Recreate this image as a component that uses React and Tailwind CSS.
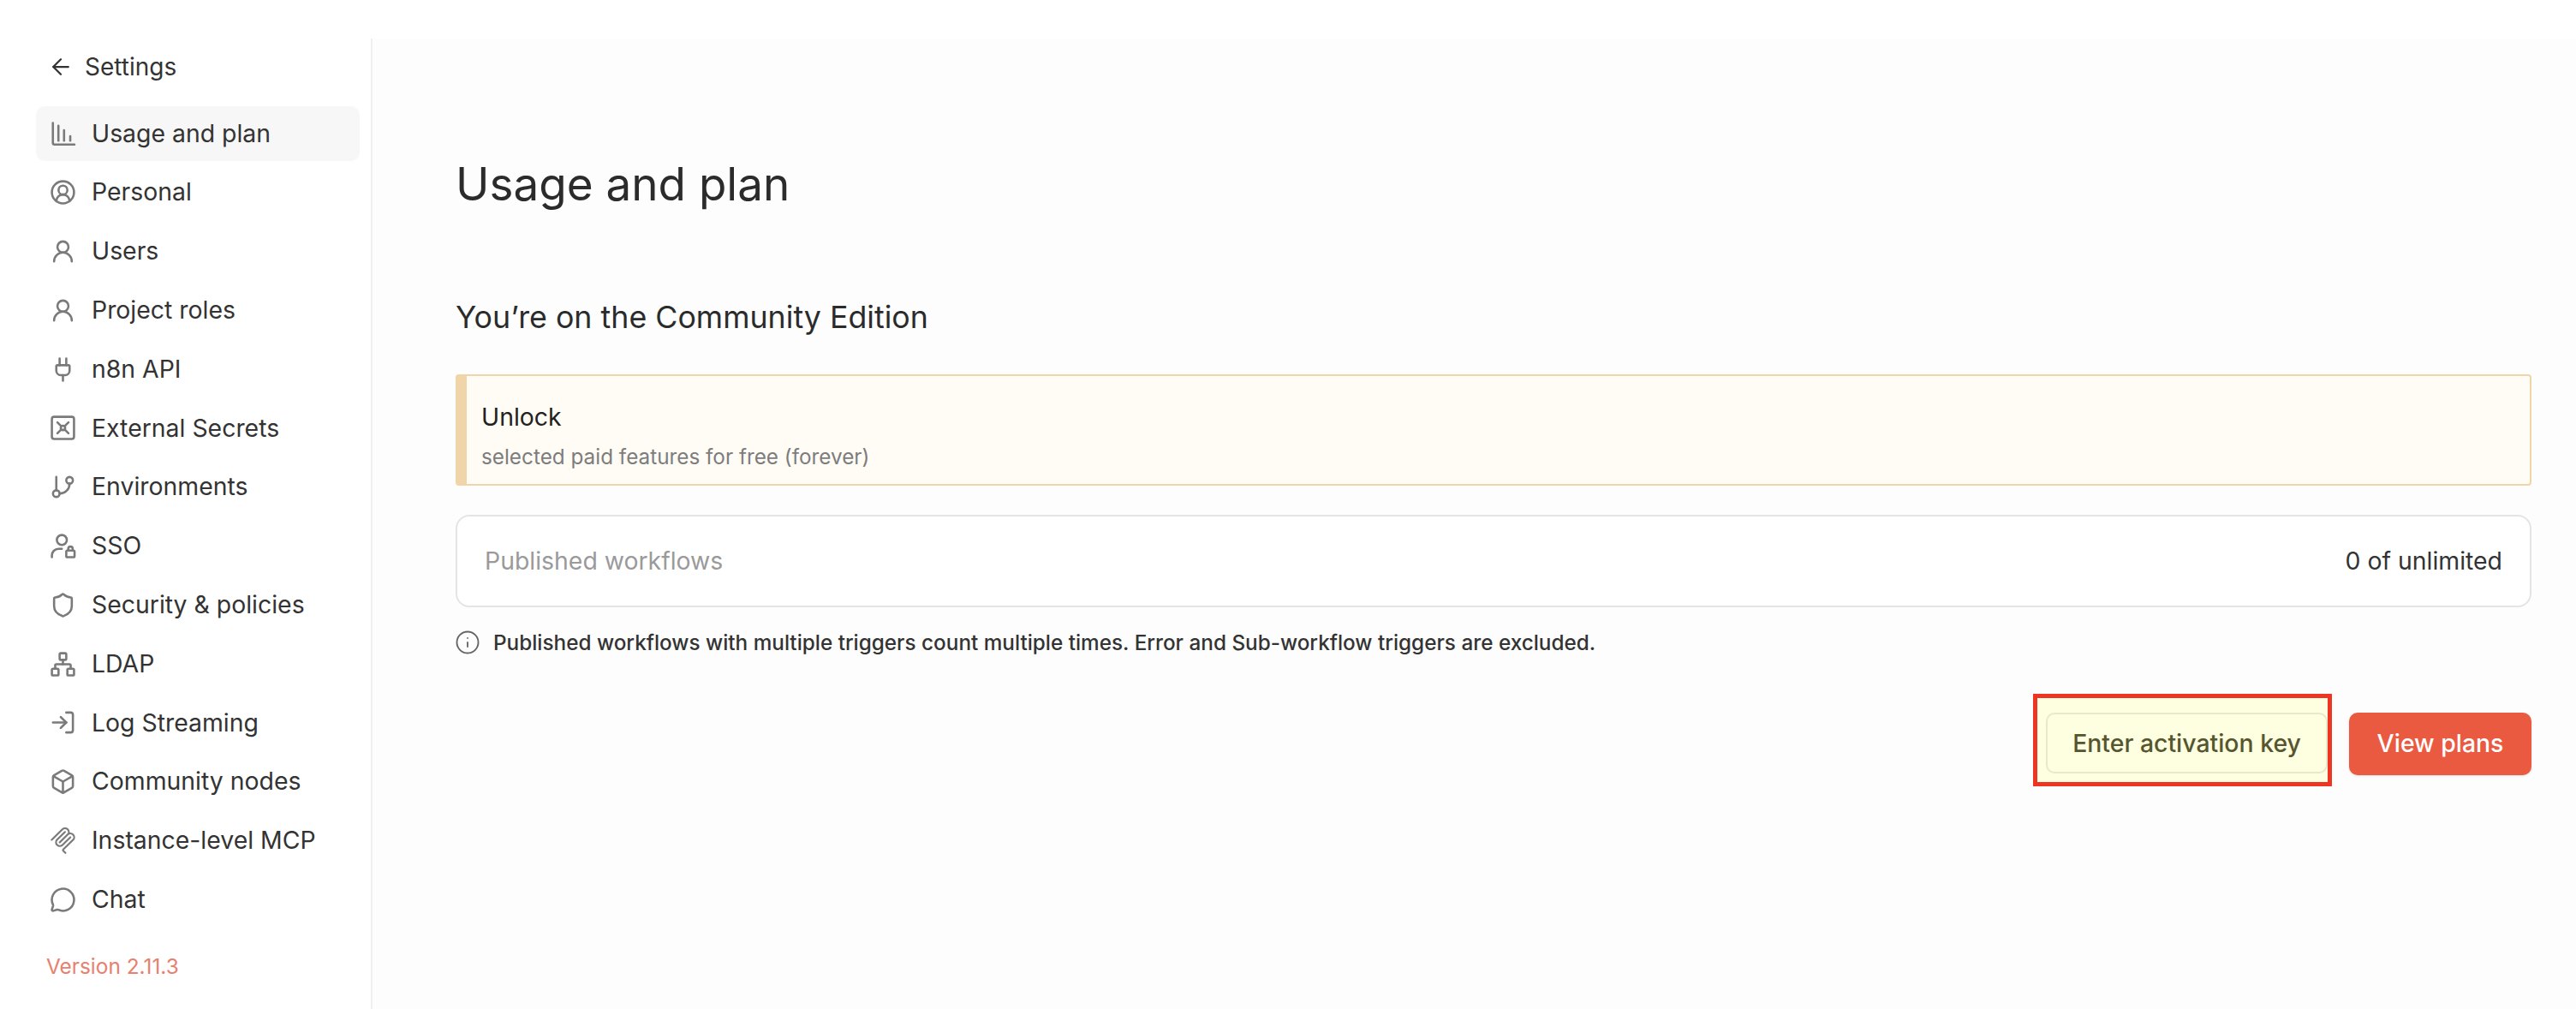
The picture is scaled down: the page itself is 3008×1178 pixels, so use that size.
import React from 'react';
import {
  ArrowLeft,
  CircleUserRound,
  UserRound,
  Plug,
  GitBranch,
  Shield,
  Network,
  LogIn,
  Box,
  MessageCircle,
  Info,
} from 'lucide-react';

const UsageIcon = (props) => (
  <svg viewBox="0 0 24 24" fill="none" stroke="currentColor" strokeWidth="2" strokeLinecap="round" strokeLinejoin="round" {...props}>
    <path d="M2.9 2v18a1.5 1.5 0 0 0 1.5 1.5h18" />
    <path d="M7.9 4.5V18" />
    <path d="M13 8.5V18" />
    <path d="M18.6 14v4" />
  </svg>
);

const VaultIcon = (props) => (
  <svg viewBox="0 0 24 24" fill="none" stroke="currentColor" strokeWidth="2" strokeLinecap="round" strokeLinejoin="round" {...props}>
    <rect x="2" y="2" width="20" height="20" rx="2" />
    <circle cx="12" cy="12" r="2" />
    <path d="m7 7 3.5 3.5M17 7l-3.5 3.5M7 17l3.5-3.5M17 17l-3.5-3.5" />
  </svg>
);

const SsoIcon = (props) => (
  <svg viewBox="0 0 24 24" fill="none" stroke="currentColor" strokeWidth="2" strokeLinecap="round" strokeLinejoin="round" {...props}>
    <circle cx="11" cy="6.5" r="4.5" />
    <path d="M2 22v-1.5a6 6 0 0 1 6-6h3" />
    <rect x="15" y="16" width="7.5" height="6" rx="1" />
    <path d="M16.8 16v-1.5a2 2 0 0 1 4 0V16" />
  </svg>
);

const McpIcon = (props) => (
  <svg viewBox="0 0 24 24" fill="currentColor" {...props}>
    <path d="M15.688 2.343a2.588 2.588 0 00-3.61 0l-9.626 9.44a.863.863 0 01-1.203 0 .823.823 0 010-1.18l9.626-9.44a4.313 4.313 0 016.016 0 4.116 4.116 0 011.204 3.54 4.3 4.3 0 013.609 1.18l.05.05a4.115 4.115 0 010 5.9l-8.706 8.537a.274.274 0 000 .393l1.788 1.754a.823.823 0 010 1.18.863.863 0 01-1.203 0l-1.788-1.753a1.92 1.92 0 010-2.754l8.706-8.538a2.47 2.47 0 000-3.54l-.05-.049a2.588 2.588 0 00-3.607-.003l-7.172 7.034-.002.002-.098.097a.863.863 0 01-1.204 0 .823.823 0 010-1.18l7.273-7.133a2.47 2.47 0 00-.003-3.537z" />
    <path d="M14.485 4.703a.823.823 0 000-1.18.863.863 0 00-1.204 0l-7.119 6.982a4.115 4.115 0 000 5.9 4.314 4.314 0 006.016 0l7.12-6.982a.823.823 0 000-1.18.863.863 0 00-1.204 0l-7.119 6.982a2.588 2.588 0 01-3.61 0 2.47 2.47 0 010-3.54l7.12-6.982z" />
  </svg>
);

const navItems = [
  { label: 'Usage and plan', icon: UsageIcon, active: true },
  { label: 'Personal', icon: CircleUserRound },
  { label: 'Users', icon: UserRound },
  { label: 'Project roles', icon: UserRound },
  { label: 'n8n API', icon: Plug },
  { label: 'External Secrets', icon: VaultIcon },
  { label: 'Environments', icon: GitBranch },
  { label: 'SSO', icon: SsoIcon },
  { label: 'Security & policies', icon: Shield },
  { label: 'LDAP', icon: Network },
  { label: 'Log Streaming', icon: LogIn },
  { label: 'Community nodes', icon: Box },
  { label: 'Instance-level MCP', icon: McpIcon },
  { label: 'Chat', icon: MessageCircle },
];

export default function App() {
  return (
    <div className="h-[1178px] overflow-hidden bg-white pt-[45px] font-['Inter',sans-serif] text-[#333]">
      <div className="flex h-full">
        <aside className="ml-[42px] flex w-[393px] shrink-0 flex-col border-r-2 border-[#efefef] pr-[13px]">
          <div className="flex h-[62px] items-center pl-[14px] pt-[4px] text-[28px] text-[#333]">
            <ArrowLeft className="mr-[13px] h-[30px] w-[30px]" strokeWidth={1.8} />
            <span>Settings</span>
          </div>
          <nav className="mt-[17px] flex flex-col gap-[4.8px]">
            {navItems.map(({ label, icon: Icon, active }) => (
              <div
                key={label}
                className={`flex h-[64px] items-center rounded-[10px] pl-[16px] text-[28.4px] ${active ? 'bg-[#f8f7f7]' : ''}`}
              >
                <Icon className="mr-[18px] h-[31px] w-[31px] shrink-0 text-[#7a7a7a]" />
                <span>{label}</span>
              </div>
            ))}
          </nav>
          <p className="mt-[28px] pl-[12px] text-[24.4px] text-[#e8806f]">Version 2.11.3</p>
        </aside>

        <main className="min-w-0 flex-1 bg-[#fdfdfd] pl-[97px] pr-[52px] pt-[138px]">
          <h1 className="text-[53px] leading-[64px] text-[#2b2b2b]">Usage and plan</h1>
          <h2 className="mt-[101px] text-[35.75px] leading-[44px] text-[#2b2b2b]">You’re on the Community Edition</h2>

          <div className="mt-[45px] flex h-[130px] flex-col rounded-[4px] border-2 border-l-[13px] border-[#f0d5a8] bg-[#fffbf5] pl-[17px] pt-[30px]">
            <p className="text-[28.4px] leading-[36px] text-[#222]">Unlock</p>
            <p className="mt-[12px] text-[24.3px] leading-[32px] text-[#7d7d7d]">selected paid features for free (forever)</p>
          </div>

          <div className="mt-[34px] flex h-[108px] items-center justify-between rounded-[16px] border-2 border-[#e4e4e4] bg-white px-[32px] text-[28.4px]">
            <span className="text-[#9a9a9a]">Published workflows</span>
            <span className="text-[#333]">0 of unlimited</span>
          </div>

          <div className="mt-[23px] flex items-center text-[24.3px] font-medium text-[#333]">
            <Info className="-ml-[1px] mr-[15px] h-[30px] w-[30px] text-[#666]" strokeWidth={1.5} />
            <span className="leading-[36px]">Published workflows with multiple triggers count multiple times. Error and Sub-workflow triggers are excluded.</span>
          </div>

          <div className="mt-[42px] flex items-start justify-end gap-[20px]">
            {/* red frame drawn around the button */}
            <div className="flex h-[108px] items-start border-[5px] border-[#ee3524] bg-[#fefee0] pl-[10px] pt-[17px]">
              <button className="h-[71px] w-[329px] rounded-[10px] border-2 border-[#e8e8cc] bg-[#fefee0] pt-[2px] text-[28.4px] font-medium text-[#55562f]">
                Enter activation key
              </button>
            </div>
            <button className="mt-[22px] h-[73px] w-[213px] rounded-[10px] bg-[#ea5a40] text-[28.4px] font-medium text-white shadow-sm">
              View plans
            </button>
          </div>
        </main>
      </div>
    </div>
  );
}
